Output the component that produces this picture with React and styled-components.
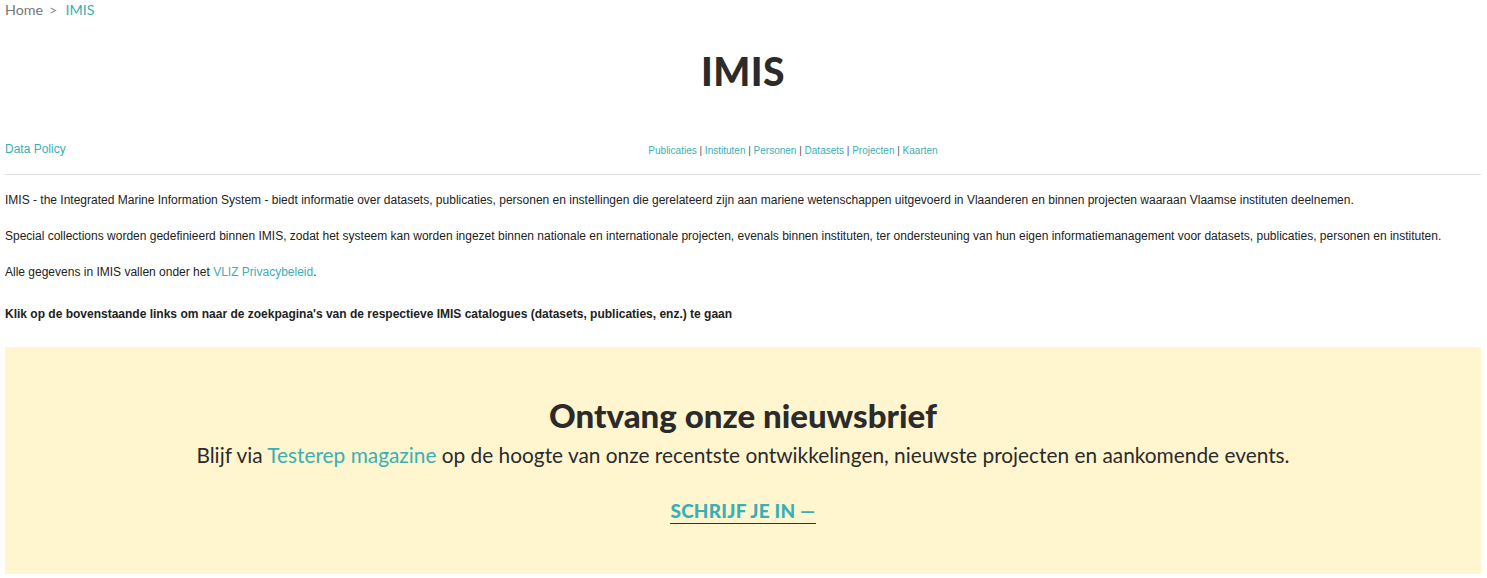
import React from "react";
import styled, { createGlobalStyle } from "styled-components";

const Global = createGlobalStyle`
  html, body { margin: 0; padding: 0; background: #fff; }
  body { font-family: "Liberation Sans", Arial, sans-serif; color: #222; }
  a { text-decoration: none; color: #3aafb4; }
`;

const Page = styled.div`
  padding: 0 6px 0 5px;
`;

const Crumbs = styled.nav`
  font-family: Lato, "Open Sans", sans-serif;
  font-size: 14.3px;
  line-height: 20px;
  height: 20px;
  color: #777;
  display: flex;
  gap: 6px;
`;

const CrumbSep = styled.span`
  color: #888;
  margin-right: 2px;
`;

const Title = styled.h1`
  margin: 0;
  padding-top: 28px;
  height: 74px;
  text-align: center;
  font-family: Lato, sans-serif;
  font-weight: 900;
  font-size: 39px;
  line-height: 46px;
  color: #2b2b2b;
  letter-spacing: 0.5px;
  box-sizing: border-box;
`;

const Menu = styled.div`
  display: grid;
  grid-template-columns: 100px 1fr;
  align-items: center;
  margin-top: 43px;
  height: 24px;
`;

const PolicyLink = styled.a`
  font-size: 12px;
`;

const NavLinks = styled.div`
  text-align: center;
  font-size: 10px;
  color: #555;
  padding-top: 2px;
  a { color: #3aafb4; }
`;

const Rule = styled.hr`
  border: 0;
  border-top: 1px solid #dcdcdc;
  margin: 13px 0 0 0;
`;

const Para = styled.p`
  font-size: 12px;
  line-height: 16px;
  margin: ${(p) => p.$mt || 16}px 0 0 0;
  font-weight: ${(p) => (p.$bold ? 700 : 400)};
  color: #222;
`;

const Newsletter = styled.section`
  margin-top: 25px;
  background: #fff6d0;
  height: 227px;
  display: flex;
  flex-direction: column;
  align-items: center;
  font-family: Lato, sans-serif;
  color: #2b2b2b;
  padding-top: 50px;
  box-sizing: border-box;
`;

const NewsTitle = styled.h2`
  margin: 0;
  font-size: 33px;
  line-height: 36px;
  font-weight: 900;
`;

const NewsText = styled.p`
  margin: 7px 0 0 0;
  font-size: 20.85px;
  line-height: 30px;
  a { color: #3aafb4; }
`;

const Cta = styled.a`
  margin-top: 30px;
  font-size: 19px;
  font-weight: 900;
  color: #3aafb4;
  line-height: 22px;
  padding-bottom: 1px;
  border-bottom: 1px solid #333;
  letter-spacing: 0.2px;
`;

export default function App() {
  const links = ["Publicaties", "Instituten", "Personen", "Datasets", "Projecten", "Kaarten"];
  return (
    <>
      <Global />
      <Page>
        <Crumbs>
          <span>Home</span>
          <CrumbSep>&gt;</CrumbSep>
          <a href="#">IMIS</a>
        </Crumbs>
        <Title>IMIS</Title>
        <Menu>
          <PolicyLink href="#">Data Policy</PolicyLink>
          <NavLinks>
            {links.map((l, i) => (
              <React.Fragment key={l}>
                <a href="#">{l}</a>
                {i < links.length - 1 ? " | " : ""}
              </React.Fragment>
            ))}
          </NavLinks>
        </Menu>
        <Rule />
        <Para $mt={17}>
          IMIS - the Integrated Marine Information System - biedt informatie over datasets, publicaties, personen en instellingen die gerelateerd zijn aan mariene wetenschappen uitgevoerd in Vlaanderen en binnen projecten waaraan Vlaamse instituten deelnemen.
        </Para>
        <Para $mt={20}>
          Special collections worden gedefinieerd binnen IMIS, zodat het systeem kan worden ingezet binnen nationale en internationale projecten, evenals binnen instituten, ter ondersteuning van hun eigen informatiemanagement voor datasets, publicaties, personen en instituten.
        </Para>
        <Para $mt={20}>
          Alle gegevens in IMIS vallen onder het <a href="#">VLIZ Privacybeleid</a>.
        </Para>
        <Para $mt={26} $bold>
          Klik op de bovenstaande links om naar de zoekpagina's van de respectieve IMIS catalogues (datasets, publicaties, enz.) te gaan
        </Para>
        <Newsletter>
          <NewsTitle>Ontvang onze nieuwsbrief</NewsTitle>
          <NewsText>
            Blijf via <a href="#">Testerep magazine</a> op de hoogte van onze recentste ontwikkelingen, nieuwste projecten en aankomende events.
          </NewsText>
          <Cta href="#">SCHRIJF JE IN —</Cta>
        </Newsletter>
      </Page>
    </>
  );
}
